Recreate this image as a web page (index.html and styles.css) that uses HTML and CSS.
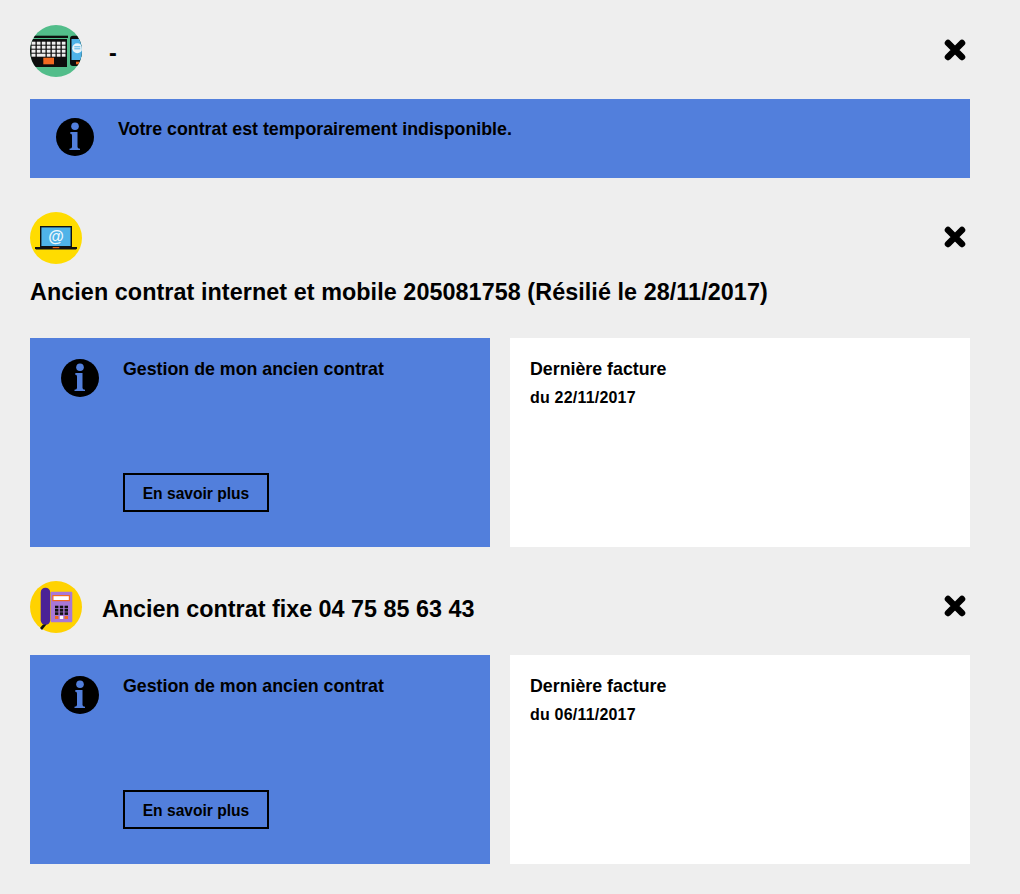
FILE: index.html
```html
<!DOCTYPE html>
<html lang="fr">
<head>
  <meta charset="UTF-8" />
  <meta name="viewport" content="width=device-width, initial-scale=1" />
  <title>Mes contrats</title>
  <link rel="stylesheet" href="styles.css">
</head>
<body>
  <div class="page">

    <section class="contract contract-first">
      <div class="contract-head">
        <svg class="avatar" viewBox="0 0 52 52">
          <defs><clipPath id="clip1"><circle cx="26" cy="26" r="26"/></clipPath></defs>
          <circle cx="26" cy="26" r="26" fill="#52bd8a"/>
          <g clip-path="url(#clip1)">
            <rect x="0" y="10.700" width="38" height="2.300" fill="#0d0d0d"/>
            <rect x="0" y="14" width="37" height="28" fill="#0d0d0d"/>
            <g fill="#eee">
              <rect x="1.500" y="16.700" width="34" height="3"/>
              <rect x="1.500" y="20.700" width="34" height="3"/>
              <rect x="1.500" y="24.700" width="34" height="3"/>
              <rect x="1.500" y="28.700" width="34" height="3"/>
            </g>
            <g fill="#0d0d0d">
              <rect x="5.500" y="16" width="1.300" height="16"/>
              <rect x="10.500" y="16" width="1.300" height="12"/>
              <rect x="15.500" y="16" width="1.300" height="16"/>
              <rect x="20.500" y="16" width="1.300" height="16"/>
              <rect x="25.500" y="16" width="1.300" height="16"/>
              <rect x="30.500" y="16" width="1.300" height="16"/>
            </g>
            <rect x="13.300" y="32.700" width="10.700" height="6.600" fill="#f26a21"/>
            <rect x="40" y="10.700" width="14" height="30.300" rx="3" fill="#0d0d0d"/>
            <rect x="41.500" y="14" width="12" height="21" fill="#4fb3e8"/>
            <circle cx="47.300" cy="23.300" r="5" fill="#e8f3f8"/>
            <rect x="44.300" y="21.300" width="6" height="1" fill="#4fb3e8"/>
            <rect x="44.300" y="23.300" width="6" height="1" fill="#4fb3e8"/>
            <rect x="46" y="36.700" width="3.300" height="2.600" fill="#f26a21"/>
          </g>
        </svg>
        <h2 class="head-title head-title-dash">-</h2>
        <svg class="close" viewBox="0 0 24 24"><path d="M5 5 19 19M19 5 5 19"/></svg>
      </div>
      <div class="banner">
        <svg class="info" viewBox="0 0 38 38">
          <circle cx="19" cy="19" r="19" fill="#000"/>
          <circle cx="19" cy="8.300" r="3.800" fill="#527fdc"/>
          <path d="M14.500 14h7v15q0 1.700 2.500 1.700v1.300h-10.500v-1.300q2.500 0 2.500-1.700v-11.500q0-2-2-2z" fill="#527fdc"/>
        </svg>
        <p class="banner-text">Votre contrat est temporairement indisponible.</p>
      </div>
    </section>

    <section class="contract">
      <div class="contract-head contract-head-short">
        <svg class="avatar" viewBox="0 0 52 52">
          <circle cx="26" cy="26" r="26" fill="#ffdc00"/>
          <rect x="10.700" y="14.700" width="30.600" height="20" fill="#4fb3e8" stroke="#111" stroke-width="1.400"/>
          <path d="M5 35h42v1.500l-1 1H6l-1-1z" fill="#111"/>
          <rect x="22.700" y="35" width="6.600" height="1.200" fill="#e0601a"/>
          <text class="at" x="26" y="29.500" text-anchor="middle">@</text>
        </svg>
        <svg class="close" viewBox="0 0 24 24"><path d="M5 5 19 19M19 5 5 19"/></svg>
      </div>
      <h2 class="head-title contract-name">Ancien contrat internet et mobile 205081758 (Résilié le 28/11/2017)</h2>
      <div class="cards">
        <div class="card card-blue">
          <svg class="info" viewBox="0 0 38 38">
            <circle cx="19" cy="19" r="19" fill="#000"/>
            <circle cx="19" cy="8.300" r="3.800" fill="#527fdc"/>
            <path d="M14.500 14h7v15q0 1.700 2.500 1.700v1.300h-10.500v-1.300q2.500 0 2.500-1.700v-11.500q0-2-2-2z" fill="#527fdc"/>
          </svg>
          <div class="card-body">
            <div class="card-title">Gestion de mon ancien contrat</div>
            <a class="more" href="#">En savoir plus</a>
          </div>
        </div>
        <div class="card card-white">
          <div class="card-title">Dernière facture</div>
          <div class="card-date">du 22/11/2017</div>
        </div>
      </div>
    </section>

    <section class="contract">
      <div class="contract-head">
        <svg class="avatar" viewBox="0 0 52 52">
          <circle cx="26" cy="26" r="26" fill="#ffd200"/>
          <rect x="20.700" y="10.700" width="21.600" height="30.600" rx="1" fill="#a877d8"/>
          <rect x="10.700" y="6.700" width="9.500" height="37.300" rx="4.700" fill="#4b2296"/>
          <path d="M13 43.500h3.500l-4.500 5.500-2-2z" fill="#111"/>
          <rect x="22.900" y="14.600" width="16.500" height="5" fill="#fff" stroke="#f26a21" stroke-width="1.200"/>
          <g fill="#111">
            <rect x="25" y="24.700" width="3.400" height="2.600"/><rect x="29.800" y="24.700" width="3.400" height="2.600"/><rect x="34.600" y="24.700" width="3.400" height="2.600"/>
            <rect x="25" y="28" width="3.400" height="2.600"/><rect x="29.800" y="28" width="3.400" height="2.600"/><rect x="34.600" y="28" width="3.400" height="2.600"/>
            <rect x="25" y="31.300" width="3.400" height="2.600"/><rect x="29.800" y="31.300" width="3.400" height="2.600"/><rect x="34.600" y="31.300" width="3.400" height="2.600"/>
          </g>
          <rect x="25" y="35" width="3.400" height="3" fill="#f26a21"/>
          <rect x="29.800" y="35" width="3.400" height="3" fill="#fff"/>
          <rect x="34.600" y="35" width="3.400" height="3" fill="#f26a21"/>
        </svg>
        <h2 class="head-title">Ancien contrat fixe 04 75 85 63 43</h2>
        <svg class="close" viewBox="0 0 24 24"><path d="M5 5 19 19M19 5 5 19"/></svg>
      </div>
      <div class="cards">
        <div class="card card-blue">
          <svg class="info" viewBox="0 0 38 38">
            <circle cx="19" cy="19" r="19" fill="#000"/>
            <circle cx="19" cy="8.300" r="3.800" fill="#527fdc"/>
            <path d="M14.500 14h7v15q0 1.700 2.500 1.700v1.300h-10.500v-1.300q2.500 0 2.500-1.700v-11.500q0-2-2-2z" fill="#527fdc"/>
          </svg>
          <div class="card-body">
            <div class="card-title">Gestion de mon ancien contrat</div>
            <a class="more" href="#">En savoir plus</a>
          </div>
        </div>
        <div class="card card-white">
          <div class="card-title">Dernière facture</div>
          <div class="card-date">du 06/11/2017</div>
        </div>
      </div>
    </section>

  </div>
</body>
</html>
```

FILE: styles.css
```css
* {
  box-sizing: border-box;
}
html,
body {
  margin: 0;
  background: #eeeeee;
}
body {
  font-family: "Liberation Sans", Arial, sans-serif;
  color: #000;
  font-weight: 700;
}
.page {
  width: 940px;
  margin-left: 30px;
  padding-top: 25px;
  padding-bottom: 30px;
}

.contract {
  margin-bottom: 34px;
}
.contract:last-child {
  margin-bottom: 0;
}

.contract-head {
  display: flex;
  align-items: center;
  height: 52px;
  margin-bottom: 22px;
}
.contract-head-short {
  margin-bottom: 13px;
}
.avatar {
  width: 52px;
  height: 52px;
  flex-shrink: 0;
}
.at {
  font-family: "Liberation Sans", Arial, sans-serif;
  font-size: 16px;
  font-weight: 700;
  fill: #eef8fd;
}
.close {
  width: 24px;
  height: 24px;
  margin-left: auto;
  margin-right: 3px;
  margin-top: -2px;
  fill: none;
  stroke: #000;
  stroke-width: 6.500;
  stroke-linecap: round;
}

.head-title {
  margin: 4px 0 0 20px;
  font-size: 23.350px;
  line-height: 30px;
  font-weight: 700;
}
.head-title-dash {
  margin-left: 27px;
}
.contract-name {
  margin: 0 0 31px;
  letter-spacing: 0.070px;
}

.banner {
  display: flex;
  height: 79px;
  background: #527fdc;
  padding: 19px 0 0 26px;
}
.banner-text {
  margin: 1px 0 0 24px;
  font-size: 17.800px;
  line-height: 20px;
}
.info {
  width: 38px;
  height: 38px;
  flex-shrink: 0;
}

.cards {
  display: grid;
  grid-template-columns: 460px 460px;
  gap: 20px;
}
.card {
  height: 209px;
}
.card-blue {
  display: flex;
  background: #527fdc;
  padding: 21px 0 0 31px;
}
.card-body {
  margin-left: 24px;
}
.card-title {
  font-size: 17.800px;
  line-height: 20px;
}
.card-blue .card-title {
  margin-bottom: 94px;
}
.card-white {
  background: #fff;
  padding: 21px 20px 0;
}
.card-date {
  margin-top: 10px;
  font-size: 16px;
  letter-spacing: 0.200px;
  line-height: 18px;
}
.more {
  display: block;
  width: 146px;
  height: 39px;
  border: 2px solid #000;
  color: #000;
  text-decoration: none;
  text-align: center;
  font-size: 15.600px;
  line-height: 37px;
}
```
